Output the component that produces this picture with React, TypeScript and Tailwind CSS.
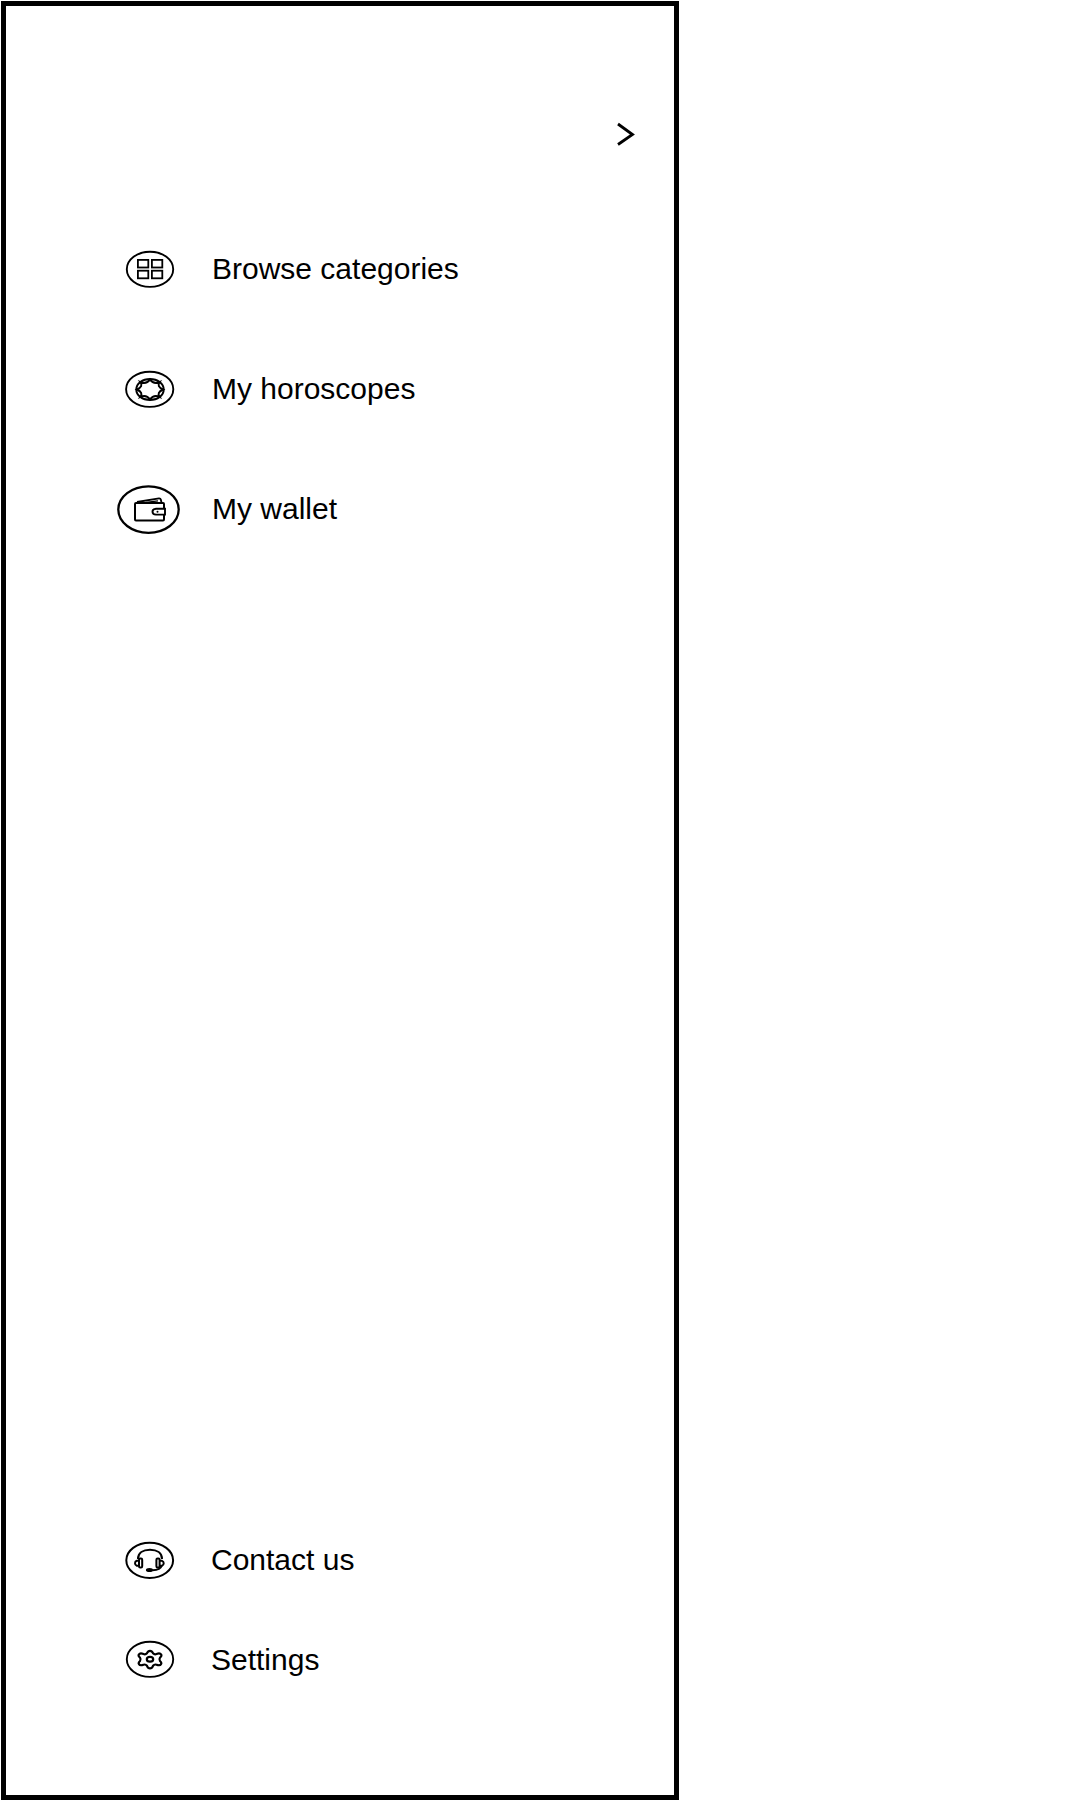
import type { ReactNode } from "react";

function IconFrame({ children }: { children: ReactNode }) {
  return (
    <svg
      className="h-[52px] w-16 shrink-0 overflow-visible"
      viewBox="0 0 64 52"
      fill="none"
      stroke="currentColor"
      strokeWidth="2"
      aria-hidden="true"
    >
      {children}
    </svg>
  );
}

function CategoriesIcon() {
  return (
    <IconFrame>
      <ellipse cx="32" cy="26.3" rx="23.2" ry="17.6" strokeWidth="1.9" />
      <g strokeWidth="1.8">
        <rect x="19.9" y="16.9" width="10.4" height="7.6" />
        <rect x="33.9" y="16.9" width="10.4" height="7.6" />
        <rect x="19.9" y="27.7" width="10.4" height="7.6" />
        <rect x="33.9" y="27.7" width="10.4" height="7.6" />
      </g>
    </IconFrame>
  );
}

function HoroscopeIcon() {
  return (
    <IconFrame>
      <ellipse cx="31.7" cy="26.3" rx="23.6" ry="17.6" strokeWidth="1.9" />
      <ellipse cx="32" cy="26.5" rx="13.7" ry="10.6" strokeWidth="2" />
      <path
        strokeWidth="2"
        d="M45 26.5Q38.5 23.5 41.5 19.2Q35.500 21.5 32 16.5Q28.5 21.5 22.5 19.2Q25.5 23.5 19 26.5Q25.5 29.5 22.5 33.8Q28.5 31.5 32 36.5Q35.5 31.5 41.5 33.8Q38.5 29.5 45 26.5Z"
      />
    </IconFrame>
  );
}

function WalletIcon() {
  return (
    <IconFrame>
      <ellipse cx="30.5" cy="26.6" rx="30.2" ry="23.2" strokeWidth="2.3" />
      <path d="M46 25V21Q46 20 45 20H18Q17 20 17 21V36.5Q17 37.5 18 37.5H45Q46 37.5 46 36.5V32" />
      <path d="M47 25.8H38Q34.5 26 34.5 28.7Q34.5 31.4 38 31.6H47Z" strokeWidth="1.9" />
      <path d="M19 19L41 15.3Q42.5 15.2 42.8 16.5L43.5 19.5" strokeWidth="1.8" />
      <path d="M28 19.3L40 17.8" strokeWidth="1.3" />
      <circle cx="39.5" cy="28.7" r="1" fill="currentColor" stroke="none" />
    </IconFrame>
  );
}

function HeadsetIcon() {
  return (
    <IconFrame>
      <ellipse cx="31.7" cy="26.3" rx="23.4" ry="17.6" />
      <path d="M20 25C20 19 25 15.8 32 15.8S44 19 44 25" />
      <rect x="21" y="24.5" width="3.2" height="9" rx="1.2" />
      <path d="M20.5 26.8H18.8Q17 27.5 17 29.3T18.8 31.7H20.5" />
      <rect x="38.4" y="24.5" width="3.2" height="9" rx="1.2" />
      <path d="M42 26.8H44Q45.7 27.5 45.7 29.3T44 31.7H42" />
      <path d="M43.5 32Q42.5 36 34.5 36.2" />
      <ellipse cx="31.5" cy="36" rx="2.6" ry="1" />
    </IconFrame>
  );
}

function SettingsIcon() {
  return (
    <IconFrame>
      <ellipse cx="32" cy="25.3" rx="23.2" ry="17.6" strokeWidth="1.9" />
      <path
        strokeWidth="2.2"
        strokeLinejoin="round"
        d="M29 19.2Q30 16.8 32 16.8T35 19.2Q36.5 20.8 38.5 20Q42 18.6 43.2 20.6Q44 22 42 23.6Q40.8 25.3 42 27Q44 28.8 43 30.2Q42 32 38.5 30.7Q36.5 30 35 31.8Q34 34.4 32 34.4T29 31.8Q27.5 30 25.5 30.7Q22 32 21 30.2Q20 28.8 22 27Q23.2 25.3 22 23.6Q20 22 20.8 20.6Q22 18.6 25.5 20Q27.5 20.8 29 19.2Z"
      />
      <ellipse cx="32" cy="25.3" rx="3.2" ry="2.4" strokeWidth="2.2" />
    </IconFrame>
  );
}

const primaryItems = [
  { label: "Browse categories", href: "#categories", Icon: CategoriesIcon },
  { label: "My horoscopes", href: "#horoscopes", Icon: HoroscopeIcon },
  { label: "My wallet", href: "#wallet", Icon: WalletIcon },
];

const secondaryItems = [
  { label: "Contact us", href: "#contact", Icon: HeadsetIcon },
  { label: "Settings", href: "#settings", Icon: SettingsIcon },
];

export default function App() {
  return (
    <div className="flex min-h-screen bg-white pl-px pt-px font-['Liberation_Sans',Arial,sans-serif] text-[30px] leading-9 text-black">
      <aside className="flex w-full max-w-[678px] flex-col border-[5px] border-black pb-[85px]">
        <header className="flex justify-end pr-8 pt-[108px]">
          <button type="button" aria-label="Open profile" className="flex h-10 w-8 items-center justify-center">
            <svg className="h-6 w-5" viewBox="0 0 20 24" fill="none" stroke="currentColor" strokeWidth="2.8" aria-hidden="true">
              <path d="M2 2L16.5 12.5L2 22.5" />
            </svg>
          </button>
        </header>

        <nav aria-label="Main" className="mt-[55px]">
          <ul>
            {primaryItems.map(({ label, href, Icon }) => (
              <li key={label}>
                <a href={href} className="flex h-[120px] items-center gap-[30px] pl-28">
                  <Icon />
                  <span>{label}</span>
                </a>
              </li>
            ))}
          </ul>
        </nav>

        <nav aria-label="Support" className="mt-auto">
          <ul>
            {secondaryItems.map(({ label, href, Icon }) => (
              <li key={label}>
                <a href={href} className="flex h-[100px] items-center gap-[29px] pl-28">
                  <Icon />
                  <span>{label}</span>
                </a>
              </li>
            ))}
          </ul>
        </nav>
      </aside>
    </div>
  );
}
